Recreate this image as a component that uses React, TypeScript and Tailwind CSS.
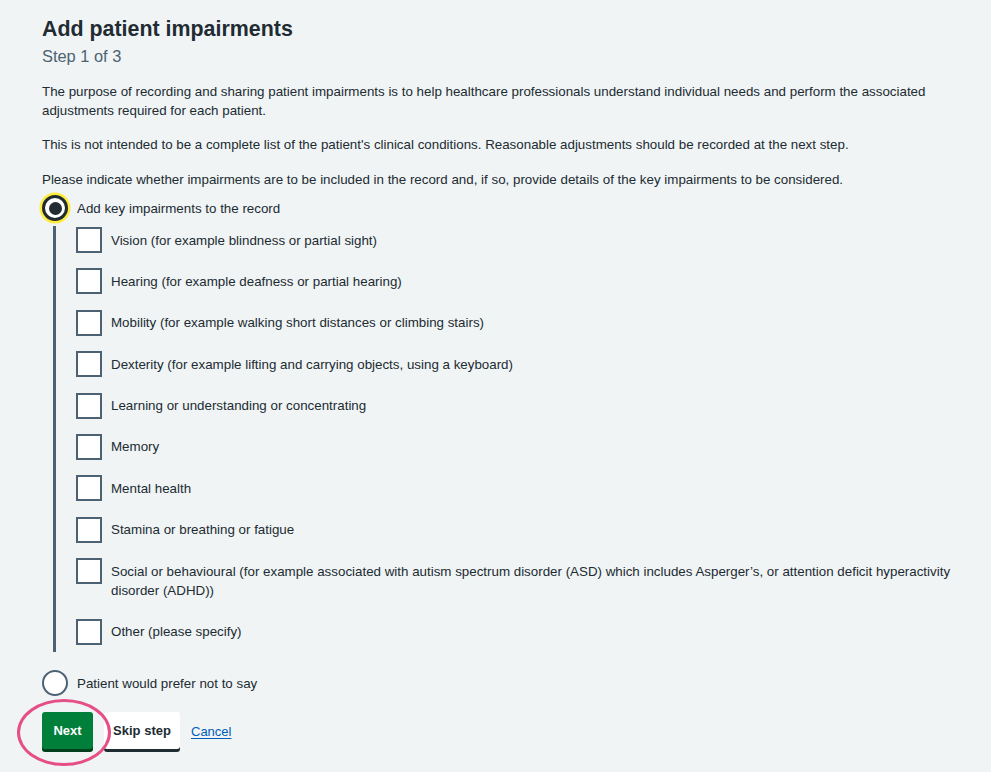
import type { ReactNode } from "react";

const impairments: ReactNode[] = [
  "Vision (for example blindness or partial sight)",
  "Hearing (for example deafness or partial hearing)",
  "Mobility (for example walking short distances or climbing stairs)",
  "Dexterity (for example lifting and carrying objects, using a keyboard)",
  "Learning or understanding or concentrating",
  "Memory",
  "Mental health",
  "Stamina or breathing or fatigue",
  <>
    Social or behavioural (for example associated with autism spectrum disorder (ASD) which includes Asperger’s, or attention deficit hyperactivity
    <br />
    disorder (ADHD))
  </>,
  "Other (please specify)",
];

function Checkbox({ label }: { label: ReactNode }) {
  return (
    <label className="flex cursor-pointer items-start gap-[9px]">
      <span className="h-[26px] w-[26px] shrink-0 border-2 border-[#4c6272] bg-white" />
      <span className="py-[3.5px] text-[13.35px] leading-[19px] whitespace-nowrap text-[#212b32]">{label}</span>
    </label>
  );
}

function Radio({ label, checked }: { label: string; checked?: boolean }) {
  return (
    <label className="flex cursor-pointer items-center gap-[9px]">
      <span
        className={
          checked
            ? "flex h-[26px] w-[26px] shrink-0 items-center justify-center rounded-full border-[3px] border-[#212b32] bg-white shadow-[0_0_0_2.5px_#ffeb3b]"
            : "flex h-[26px] w-[26px] shrink-0 items-center justify-center rounded-full border-2 border-[#4c6272] bg-white"
        }
      >
        {checked && <span className="h-[13px] w-[13px] rounded-full bg-[#212b32]" />}
      </span>
      <span className="text-[13.35px] leading-[19px] text-[#212b32]">{label}</span>
    </label>
  );
}

export default function App() {
  return (
    <div className="min-h-screen bg-[#f0f4f5] pt-[15px] pr-[20px] pb-6 pl-[42px] font-['Liberation_Sans',Arial,sans-serif] text-[#212b32]">
      <h1 className="text-[21.4px] font-bold leading-[28px]">Add patient impairments</h1>
      <p className="mt-px text-[16.4px] leading-[24px] text-[#4c6272]">Step 1 of 3</p>

      <div className="mt-[13.5px] flex flex-col gap-[15.5px] text-[13.35px] leading-[19px]">
        <p>
          The purpose of recording and sharing patient impairments is to help healthcare professionals understand individual needs and perform the associated
          <br />
          adjustments required for each patient.
        </p>
        <p>
          This is not intended to be a complete list of the patient's clinical conditions. Reasonable adjustments should be recorded at the next step.
        </p>
        <p>
          Please indicate whether impairments are to be included in the record and, if so, provide details of the key impairments to be considered.
        </p>
      </div>

      <div className="mt-[6.5px] flex flex-col">
        <Radio label="Add key impairments to the record" checked />
        <div className="mt-[5px] ml-[11px] flex flex-col gap-[15.4px] border-l-[3px] border-[#4c6272] pt-px pb-[7px] pl-[20px]">
          {impairments.map((item, i) => (
            <Checkbox key={i} label={item} />
          ))}
        </div>
        <div className="mt-[18.5px]">
          <Radio label="Patient would prefer not to say" />
        </div>
      </div>

      <div className="relative mt-4 flex items-start gap-[11px]">
        <button
          type="button"
          className="h-[37px] w-[51px] rounded-[3px] bg-[#007f3b] text-[13px] font-bold text-white shadow-[0_3px_0_#00401e]"
        >
          Next
        </button>
        <button
          type="button"
          className="h-[37px] w-[76px] rounded-[3px] bg-white text-[13px] font-bold text-[#212b32] shadow-[0_3px_0_#212b32]"
        >
          Skip step
        </button>
        <a href="#" className="self-center pt-[2px] text-[13px] text-[#005eb8] underline underline-offset-2">
          Cancel
        </a>
        <span className="pointer-events-none absolute -top-[13px] -left-[25px] h-[67px] w-[94px] rounded-[50%] border-[3px] border-[#e64f86]" />
      </div>
    </div>
  );
}
